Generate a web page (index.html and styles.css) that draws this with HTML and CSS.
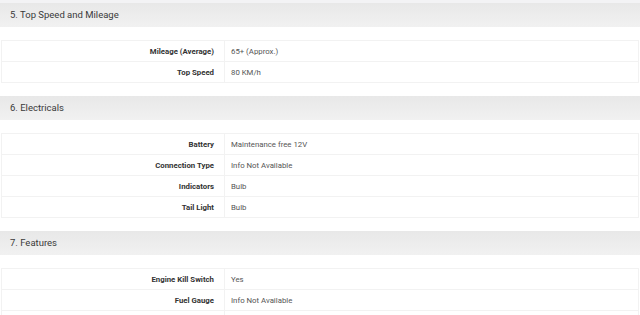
FILE: index.html
```html
<!DOCTYPE html>
<html>
<head>
<meta charset="utf-8">
<link rel="stylesheet" href="styles.css">
</head>
<body>
<div class="page">
  <section class="spec">
    <h3 class="spec-title">5. Top Speed and Mileage</h3>
    <table class="spec-table">
      <tr><th>Mileage (Average)</th><td>65+ (Approx.)</td></tr>
      <tr><th>Top Speed</th><td>80 KM/h</td></tr>
    </table>
  </section>
  <section class="spec">
    <h3 class="spec-title">6. Electricals</h3>
    <table class="spec-table">
      <tr><th>Battery</th><td>Maintenance free 12V</td></tr>
      <tr><th>Connection Type</th><td>Info Not Available</td></tr>
      <tr><th>Indicators</th><td>Bulb</td></tr>
      <tr><th>Tail Light</th><td>Bulb</td></tr>
    </table>
  </section>
  <section class="spec">
    <h3 class="spec-title">7. Features</h3>
    <table class="spec-table">
      <tr><th>Engine Kill Switch</th><td>Yes</td></tr>
      <tr><th>Fuel Gauge</th><td>Info Not Available</td></tr>
      <tr><th></th><td></td></tr>
    </table>
  </section>
</div>
</body>
</html>
```
FILE: styles.css
```css
html, body {
  margin: 0;
  padding: 0;
  background: #fff;
}
body {
  font-family: Roboto, "Liberation Sans", sans-serif;
  overflow: hidden;
}
.page {
  border-top: 3px solid #f3f3f5;
}
.spec {
  margin-bottom: 13px;
}
.spec-title {
  margin: 0 0 13px;
  height: 24px;
  line-height: 24px;
  padding: 0 10px;
  font-size: 9.5px;
  font-weight: 400;
  color: #3a3a3a;
  background: linear-gradient(#e8e8e8, #f1f1f1);
}
.spec-table {
  width: calc(100% - 2px);
  margin: 0 1px;
  border-collapse: collapse;
  font-size: 7.8px;
}
.spec-table th,
.spec-table td {
  height: 20px;
  padding: 0;
  border: 1px solid #f2f2f2;
  vertical-align: middle;
}
.spec-table th {
  width: 223px;
  box-sizing: border-box;
  text-align: right;
  padding-right: 10px;
  font-weight: 700;
  color: #333;
}
.spec-table td {
  padding-left: 6px;
  color: #555;
}
```
